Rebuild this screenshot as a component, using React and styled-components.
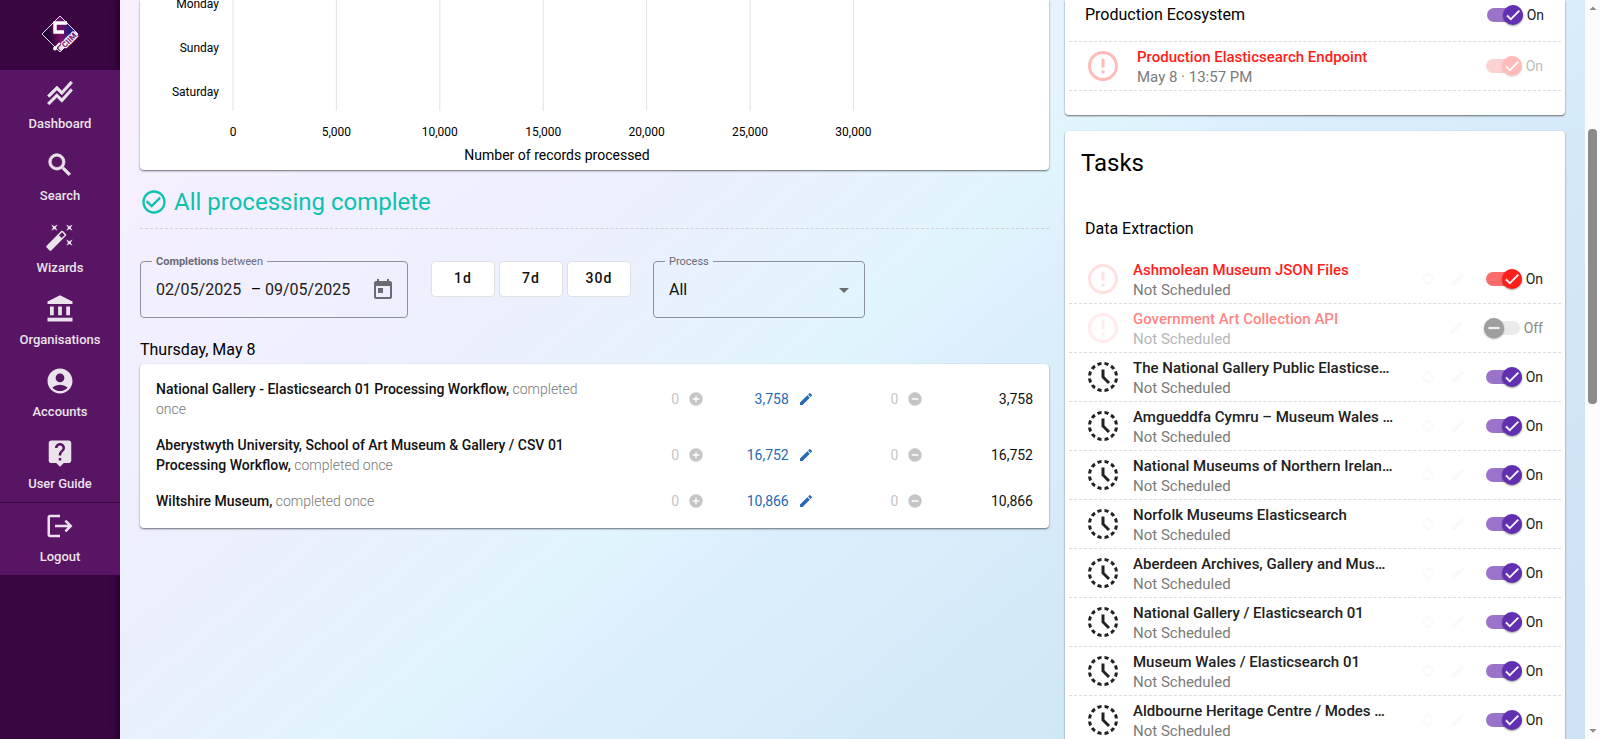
import React from 'react';
import styled, { createGlobalStyle } from 'styled-components';
import {
  MdAccountBalance,
  MdAccountCircle,
  MdAddCircle,
  MdArrowDropDown,
  MdArrowDropUp,
  MdAutoFixHigh,
  MdCheck,
  MdCheckCircleOutline,
  MdEdit,
  MdErrorOutline,
  MdHistoryToggleOff,
  MdLiveHelp,
  MdLogout,
  MdRemove,
  MdRemoveCircle,
  MdSearch,
  MdStackedLineChart,
  MdSync,
  MdToday,
} from 'react-icons/md';

const GlobalStyle = createGlobalStyle`
  * {
    box-sizing: border-box;
  }

  body {
    margin: 0;
    font-family: Roboto, "Liberation Sans", sans-serif;
    font-size: 14px;
    line-height: 20px;
    color: #000;
    overflow: hidden;
  }

  input, select, button {
    font-family: inherit;
  }
`;

const Page = styled.div`
  display: flex;
  height: 100vh;
  overflow: hidden;
`;

const Sidebar = styled.aside`
  flex: 0 0 120px;
  background-color: #3a0642;
  box-shadow: inset -8px 0 8px -6px #24022a;
`;

const LogoLink = styled.a`
  display: flex;
  justify-content: center;
  height: 70px;
  padding-top: 15px;
`;

const Nav = styled.nav`
  background-color: #581563;
`;

const NavLink = styled.a`
  display: flex;
  flex-direction: column;
  align-items: center;
  gap: 6px;
  height: 72px;
  padding-top: 8px;
  color: #ebe3ec;
  font-size: 13px;
  font-weight: 500;
  text-decoration: none;

  svg {
    width: 30px;
    height: 30px;
  }

  path:not([fill="none"]) {
    stroke: ${({ $bold }) => ($bold ? 'currentColor' : 'none')};
    stroke-width: 0.6;
  }
`;

const NavDivider = styled.hr`
  height: 1px;
  margin: 0;
  border: 0;
  background-color: #3a0642;
`;

const Main = styled.main`
  flex: 1;
  min-width: 0;
  display: flex;
  align-items: flex-start;
  gap: 16px;
  padding: 0 20px;
  background: linear-gradient(140deg, #faeffe 0%, #ebf0fe 35%, #e1f5fe 48%, #ddeffc 54%, #d0e7f6 78%, #cce3f4 100%);
`;

const Content = styled.div`
  flex: 1;
  min-width: 0;
`;

const Aside = styled.div`
  flex: 0 0 500px;
`;

const Card = styled.section`
  background-color: #fff;
  border-radius: ${({ $cut }) => ($cut ? '0 0 4px 4px' : '4px')};
  box-shadow: 0 1px 2px rgba(0, 0, 0, 0.55);
`;

const ChartCard = styled(Card)`
  height: 170px;
  overflow: hidden;
`;

const EndpointCard = styled(Card)`
  margin-bottom: 16px;
  padding-bottom: 24px;
`;

const Heading = styled.h2`
  display: flex;
  align-items: center;
  gap: 6px;
  margin: 0;
  padding: 16px 0 10px;
  border-bottom: 1px dashed #cfcfd4;
  color: #0bc1b1;
  font-size: 24px;
  font-weight: 400;
  line-height: 32px;

  svg {
    width: 28px;
    height: 28px;
  }
`;

const Filters = styled.form`
  display: flex;
  align-items: flex-start;
  padding-top: 24px;
`;

const Outline = styled.fieldset`
  display: flex;
  align-items: center;
  width: ${({ $wide }) => ($wide ? '268px' : '212px')};
  height: 65px;
  margin: 0;
  padding: 0 12px 8px 11px;
  border: 1px solid #8d919d;
  border-radius: 4px;
`;

const Legend = styled.legend`
  padding: 1px 4px 0;
  color: #6a6a74;
  font-size: 11px;
  line-height: 16px;
`;

const DateInput = styled.input`
  width: 88px;
  height: 24px;
  padding: 0;
  border: 0;
  background: none;
  color: #222;
  font-size: 16px;
`;

const DateRow = styled.div`
  display: flex;
  align-items: center;
  flex: 1;
  height: 48px;
  padding-left: 4px;
  font-size: 16px;
`;

const Dash = styled.span`
  width: 21px;
  padding-left: 3px;
  text-align: center;
`;

const IconButton = styled.button`
  display: flex;
  margin-left: auto;
  padding: 0;
  border: 0;
  background: none;
  color: #6b6b73;
  font-size: 24px;
`;

const Ranges = styled.div`
  display: flex;
  gap: 4px;
  padding: 8px 22px 0 23px;
`;

const RangeButton = styled.button`
  width: 64px;
  height: 36px;
  padding: 0 0 2px;
  border: 1px solid #e0e0e0;
  border-radius: 4px;
  background-color: #fff;
  color: #111;
  font-size: 14px;
  font-weight: 500;
  letter-spacing: 1px;
`;

const SelectRow = styled.div`
  display: flex;
  align-items: center;
  flex: 1;
  height: 48px;
  color: #6b6b73;

  svg {
    flex: none;
    width: 24px;
    height: 24px;
    margin: 0 -4px 0 -20px;
    pointer-events: none;
  }
`;

const Select = styled.select`
  appearance: none;
  width: 100%;
  height: 24px;
  padding: 0 24px 0 4px;
  border: 0;
  background: none;
  color: #111;
  font-size: 16px;
`;

const Day = styled.h3`
  margin: 0;
  padding: 20px 0 2px;
  font-size: 16px;
  font-weight: 400;
  line-height: 24px;
`;

const Table = styled.table`
  width: 100%;
  padding: 7px 16px 9px;
  table-layout: fixed;
  border-collapse: separate;
  border-spacing: 0;
`;

const NameCell = styled.th`
  width: 50%;
  padding: 8px 0;
  color: #777;
  font-weight: 300;
  text-align: left;

  strong {
    color: #111;
    font-weight: 500;
  }
`;

const countColors = { muted: '#c5c5c5', changed: '#256ab5', plain: '#111' };

const CountCell = styled.td`
  padding: 0;
  color: ${({ $tone }) => countColors[$tone]};
`;

const Count = styled.span`
  display: flex;
  align-items: center;
  justify-content: flex-end;
  gap: 9px;

  svg {
    width: 16px;
    height: 16px;
  }
`;

const Title = styled.h2`
  margin: 0;
  padding: 16px 16px 0;
  font-size: 24px;
  font-weight: 400;
  line-height: 32px;
`;

const Group = styled.div`
  padding: 0 4px;
`;

const GroupHead = styled.div`
  display: flex;
  align-items: center;
  justify-content: space-between;
  height: ${({ $tall }) => ($tall ? '76px' : '41px')};
  padding: ${({ $tall }) => ($tall ? '24px 16px 0' : '0 17px 12px 16px')};
`;

const GroupName = styled.h3`
  margin: 0;
  font-size: 16px;
  font-weight: 400;
  line-height: 24px;
`;

const List = styled.ul`
  margin: 0;
  padding: 0;
  border-top: ${({ $ruled }) => ($ruled ? '1px dashed #dcdcdc' : '0')};
  list-style: none;
`;

const Row = styled.li`
  display: flex;
  align-items: center;
  height: 49px;
  padding: 0 18px 0 16px;
  border-bottom: 1px dashed #dcdcdc;
`;

const StatusIcon = styled.span`
  display: flex;
  color: ${({ $failed }) => ($failed ? '#ff2119' : '#212121')};
  opacity: ${({ $opacity }) => $opacity || 1};

  svg {
    width: 36px;
    height: 36px;
  }
`;

const RowText = styled.div`
  width: 262px;
  margin-left: ${({ $indent }) => ($indent ? '16px' : '12px')};
  padding-top: 2px;
  opacity: ${({ $dim }) => ($dim ? 0.55 : 1)};
`;

const RowTitle = styled.div`
  overflow: hidden;
  color: ${({ $failed }) => ($failed ? '#ff2119' : '#212121')};
  font-weight: 500;
  font-size: 15px;
  text-overflow: ellipsis;
  white-space: nowrap;
`;

const RowNote = styled.div`
  color: #7b7b7b;
  font-size: 15px;
`;

const RowActions = styled.span`
  display: flex;
  gap: 14px;
  margin-left: auto;
  color: #000;
  opacity: 0.02;

  svg {
    width: 16px;
    height: 16px;
  }
`;

const Switch = styled.label`
  display: flex;
  align-items: center;
  gap: 4px;
  margin-left: ${({ $push }) => ($push ? 'auto' : '20px')};
  color: ${({ $off }) => ($off ? '#888' : '#222')};
  opacity: ${({ $dim }) => ($dim ? 0.3 : 1)};
`;

const SwitchInput = styled.input`
  position: absolute;
  width: 36px;
  height: 20px;
  margin: 0;
  opacity: 0;
`;

const tracks = { purple: '#9c73cb', red: '#fb6c6a', off: '#ebebeb' };
const thumbs = { purple: '#6130b0', red: '#ff1f1a', off: '#9e9e9e' };

const Track = styled.span`
  display: flex;
  align-items: center;
  justify-content: ${({ $tone }) => ($tone === 'off' ? 'flex-start' : 'flex-end')};
  width: 36px;
  height: 14px;
  border-radius: 7px;
  background-color: ${({ $tone }) => tracks[$tone]};
`;

const Thumb = styled.span`
  display: flex;
  align-items: center;
  justify-content: center;
  flex: 0 0 20px;
  height: 20px;
  border-radius: 50%;
  background-color: ${({ $tone }) => thumbs[$tone]};
  box-shadow: 0 1px 2px rgba(0, 0, 0, 0.4);
  color: #fff;

  svg {
    width: 18px;
    height: 18px;
  }

  path:not([fill="none"]) {
    stroke: #fff;
    stroke-width: 0.6;
  }
`;

const Scrollbar = styled.div`
  flex: 0 0 15px;
  display: flex;
  flex-direction: column;
  align-items: center;
  min-width: 0;
  background-color: #fcfcfc;
  color: #8b8b8b;

  svg {
    flex: none;
    width: 24px;
    height: 17px;
    margin: 0 -5px;
  }
`;

const ScrollTrack = styled.div`
  display: flex;
  flex: 1;
  flex-direction: column;
`;

const ScrollSpace = styled.div`
  flex: ${({ $grow }) => $grow} 0 0;
`;

const ScrollThumb = styled.div`
  flex: 275 0 0;
  width: 9px;
  border-radius: 4px;
  background-color: #8b8b8b;
`;

const navItems = [
  { label: 'Dashboard', icon: <MdStackedLineChart />, bold: true },
  { label: 'Search', icon: <MdSearch />, bold: true },
  { label: 'Wizards', icon: <MdAutoFixHigh /> },
  { label: 'Organisations', icon: <MdAccountBalance /> },
  { label: 'Accounts', icon: <MdAccountCircle /> },
  { label: 'User Guide', icon: <MdLiveHelp /> },
];

const workflows = [
  { name: 'National Gallery - Elasticsearch 01 Processing Workflow,', total: '3,758' },
  { name: 'Aberystwyth University, School of Art Museum & Gallery / CSV 01 Processing Workflow,', total: '16,752' },
  { name: 'Wiltshire Museum,', total: '10,866' },
];

const tasks = [
  { name: 'Ashmolean Museum JSON Files', failed: true },
  { name: 'Government Art Collection API', failed: true, off: true },
  { name: 'The National Gallery Public Elasticse…' },
  { name: 'Amgueddfa Cymru – Museum Wales …' },
  { name: 'National Museums of Northern Irelan…' },
  { name: 'Norfolk Museums Elasticsearch' },
  { name: 'Aberdeen Archives, Gallery and Mus…' },
  { name: 'National Gallery / Elasticsearch 01' },
  { name: 'Museum Wales / Elasticsearch 01' },
  { name: 'Aldbourne Heritage Centre / Modes …' },
];

const Logo = () => (
  <svg width="38" height="38" viewBox="0 0 38 38" role="img" aria-label="CIIM">
    <defs>
      <linearGradient id="logo-fill" x1="0" y1="0.6" x2="1" y2="0.4">
        <stop offset="0" stopColor="#10001c" />
        <stop offset="0.2" stopColor="#22063a" />
        <stop offset="0.5" stopColor="#7d0f63" />
        <stop offset="0.8" stopColor="#241a78" />
      </linearGradient>
    </defs>
    <path d="M19 1 37 19 19 37 1 19z" fill="url(#logo-fill)" stroke="#e9d9ee" strokeWidth="1" strokeLinejoin="round" />
    <path d="M26 8H14v9h9" fill="none" stroke="#fff" strokeWidth="3.5" />
    <path d="M34 16 37 19 20 36l-3-3z" fill="#e9dcee" />
    <circle cx="14" cy="33.5" r="2" fill="#fff" />
    <path d="M14 33 19 28" stroke="#fff" strokeWidth="2" />
    <text x="28" y="28" fontSize="8" fontWeight="900" fill="#7b2a80" stroke="#fff" strokeWidth="2" paintOrder="stroke" textAnchor="middle" transform="rotate(-45 28 25)">CIIM</text>
  </svg>
);

const Chart = () => (
  <svg width="800" height="170" role="img" aria-label="Number of records processed by day">
    {['Monday', 'Sunday', 'Saturday'].map((day, i) => (
      <text key={day} x="79" y={8 + i * 44} fontSize="12" textAnchor="end">{day}</text>
    ))}
    {['0', '5,000', '10,000', '15,000', '20,000', '25,000', '30,000'].map((tick, i) => (
      <g key={tick}>
        <line x1={93 + i * 103.4} x2={93 + i * 103.4} y1="0" y2="111" stroke="#e2e2e2" />
        <text x={93 + i * 103.4} y="136" fontSize="12" textAnchor="middle">{tick}</text>
      </g>
    ))}
    <text x="417" y="160" fontSize="14" textAnchor="middle">Number of records processed</text>
  </svg>
);

const Toggle = ({ tone, name, dim, push }) => (
  <Switch $off={tone === 'off'} $dim={dim} $push={push}>
    <SwitchInput type="checkbox" role="switch" aria-label={name} defaultChecked={tone !== 'off'} disabled={dim} />
    <Track $tone={tone}>
      <Thumb $tone={tone}>{tone === 'off' ? <MdRemove /> : <MdCheck />}</Thumb>
    </Track>
    {tone === 'off' ? 'Off' : 'On'}
  </Switch>
);

const Task = ({ name, failed, off }) => {
  let tone = failed ? 'red' : 'purple';
  if (off) tone = 'off';

  return (
    <Row>
      <StatusIcon $failed={failed} $opacity={failed && (off ? 0.08 : 0.13)}>
        {failed ? <MdErrorOutline /> : <MdHistoryToggleOff />}
      </StatusIcon>
      <RowText $dim={off}>
        <RowTitle $failed={failed}>{name}</RowTitle>
        <RowNote>Not Scheduled</RowNote>
      </RowText>
      <RowActions>
        {!off && <MdSync />}
        <MdEdit />
      </RowActions>
      <Toggle tone={tone} name={name} />
    </Row>
  );
};

const App = () => (
  <>
    <GlobalStyle />
    <Page>
      <Sidebar>
        <LogoLink href="#home"><Logo /></LogoLink>
        <Nav>
          {navItems.map(({ label, icon, bold }) => (
            <NavLink key={label} href="#nav" $bold={bold}>
              {icon}
              {label}
            </NavLink>
          ))}
          <NavDivider />
          <NavLink href="#logout">
            <MdLogout />
            Logout
          </NavLink>
        </Nav>
      </Sidebar>
      <Main>
        <Content>
          <ChartCard $cut><Chart /></ChartCard>
          <Heading>
            <MdCheckCircleOutline />
            All processing complete
          </Heading>
          <Filters>
            <Outline $wide>
              <Legend><b>Completions</b> between</Legend>
              <DateRow>
                <DateInput aria-label="Start date" defaultValue="02/05/2025" />
                <Dash>–</Dash>
                <DateInput aria-label="End date" defaultValue="09/05/2025" />
                <IconButton type="button" aria-label="Open calendar"><MdToday /></IconButton>
              </DateRow>
            </Outline>
            <Ranges>
              <RangeButton type="button">1d</RangeButton>
              <RangeButton type="button">7d</RangeButton>
              <RangeButton type="button">30d</RangeButton>
            </Ranges>
            <Outline>
              <Legend><label htmlFor="process">Process</label></Legend>
              <SelectRow>
                <Select id="process" defaultValue="All">
                  <option>All</option>
                </Select>
                <MdArrowDropDown />
              </SelectRow>
            </Outline>
          </Filters>
          <Day>Thursday, May 8</Day>
          <Card>
            <Table>
              <tbody>
                {workflows.map(({ name, total }) => (
                  <tr key={name}>
                    <NameCell scope="row"><strong>{name}</strong> completed once</NameCell>
                    <CountCell $tone="muted"><Count>0<MdAddCircle /></Count></CountCell>
                    <CountCell $tone="changed"><Count>{total}<MdEdit /></Count></CountCell>
                    <CountCell $tone="muted"><Count>0<MdRemoveCircle /></Count></CountCell>
                    <CountCell $tone="plain"><Count>{total}</Count></CountCell>
                  </tr>
                ))}
              </tbody>
            </Table>
          </Card>
        </Content>
        <Aside>
          <EndpointCard $cut>
            <Group>
              <GroupHead>
                <GroupName>Production Ecosystem</GroupName>
                <Toggle tone="purple" name="Production Ecosystem" push />
              </GroupHead>
              <List $ruled>
                <Row>
                  <StatusIcon $failed $opacity={0.3}><MdErrorOutline /></StatusIcon>
                  <RowText $indent>
                    <RowTitle $failed>Production Elasticsearch Endpoint</RowTitle>
                    <RowNote>May 8 · 13:57 PM</RowNote>
                  </RowText>
                  <Toggle tone="red" name="Production Elasticsearch Endpoint" dim push />
                </Row>
              </List>
            </Group>
          </EndpointCard>
          <Card>
            <Title>Tasks</Title>
            <Group>
              <GroupHead $tall>
                <GroupName>Data Extraction</GroupName>
              </GroupHead>
              <List>
                {tasks.map((task) => <Task key={task.name} {...task} />)}
              </List>
            </Group>
          </Card>
        </Aside>
      </Main>
      <Scrollbar aria-hidden="true">
        <MdArrowDropUp />
        <ScrollTrack>
          <ScrollSpace $grow={112} />
          <ScrollThumb />
          <ScrollSpace $grow={318} />
        </ScrollTrack>
        <MdArrowDropDown />
      </Scrollbar>
    </Page>
  </>
);

export default App;
